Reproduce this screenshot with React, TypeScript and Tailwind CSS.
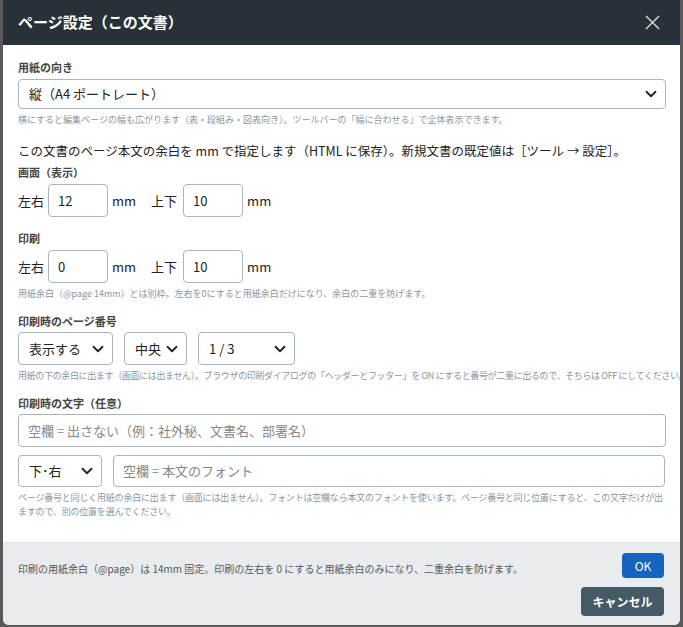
import React from "react";

const Chev = () => (
  <svg width="12" height="12" viewBox="0 0 16 16" className="absolute right-2 top-1/2 -translate-y-1/2 pointer-events-none">
    <path d="M2 5l6 6 6-6" fill="none" stroke="#222" strokeWidth="2.4" strokeLinecap="round" strokeLinejoin="round" />
  </svg>
);

const Sel = ({ w, h, text }: { w: string; h: string; text: string }) => (
  <div className={`relative ${w} ${h} border border-[#a9b4bc] rounded-[4px] flex items-center pl-[10px] text-[13px] text-[#222]`}>
    {text}
    <Chev />
  </div>
);

const Num = ({ v }: { v: string }) => (
  <div className="w-[60px] h-[33px] border border-[#a9b4bc] rounded-[4px] flex items-center pl-[9px] text-[13px] text-[#222]">{v}</div>
);

const Row = ({ a, b }: { a: string; b: string }) => (
  <div className="mt-[4px] flex items-center text-[13px] text-[#222]">
    <span className="mr-[4px]">左右</span><Num v={a} /><span className="ml-[4px] mr-[15px]">mm</span>
    <span className="mr-[6px]">上下</span><Num v={b} /><span className="ml-[4px]">mm</span>
  </div>
);

export default function App() {
  return (
    <div className="w-[683px] h-[627px] bg-[#5a5a5a] overflow-hidden" style={{ fontFamily: '"Noto Sans CJK JP", "Noto Sans", sans-serif' }}>
      <div className="mx-[3px] w-[677px] h-[625px] rounded-b-[6px] overflow-hidden flex flex-col bg-white">
        <div className="h-[45px] bg-[#263238] flex items-center justify-between pl-[15px] pr-[20px]">
          <span className="text-white text-[15px] font-bold">ページ設定（この文書）</span>
          <svg width="15" height="15" viewBox="0 0 16 16"><path d="M1 1l14 14M15 1L1 15" stroke="#cfd4d8" strokeWidth="1.6" /></svg>
        </div>
        <div className="flex-1 px-[15px] pt-[14px] text-[#333]">
          <div className="text-[11px] font-bold text-[#444] leading-[16px]">用紙の向き</div>
          <div className="mt-[4px]"><Sel w="w-[648px]" h="h-[30px]" text="縦（A4 ポートレート）" /></div>
          <div className="mt-[4px] text-[9px] text-[#8a969e] leading-[14px]">横にすると編集ページの幅も広がります（表・段組み・図表向き）。ツールバーの「幅に合わせる」で全体表示できます。</div>
          <div className="mt-[15px] text-[12.5px] text-[#222] leading-[18px]">この文書のページ本文の余白を mm で指定します（HTML に保存）。新規文書の既定値は［ツール → 設定］。</div>
          <div className="mt-[4px] text-[11px] font-bold text-[#444] leading-[16px]">画面（表示）</div>
          <Row a="12" b="10" />
          <div className="mt-[13px] text-[11px] font-bold text-[#444] leading-[16px]">印刷</div>
          <Row a="0" b="10" />
          <div className="mt-[4px] text-[9px] text-[#8a969e] leading-[14px]">用紙余白（@page 14mm）とは別枠。左右を0にすると用紙余白だけになり、余白の二重を防げます。</div>
          <div className="mt-[12px] text-[11px] font-bold text-[#444] leading-[16px]">印刷時のページ番号</div>
          <div className="mt-[3px] flex gap-[11px]">
            <Sel w="w-[95px]" h="h-[33px]" text="表示する" />
            <Sel w="w-[63px]" h="h-[33px]" text="中央" />
            <Sel w="w-[97px]" h="h-[33px]" text="1 / 3" />
          </div>
          <div className="mt-[4px] text-[9px] text-[#8a969e] leading-[14px] whitespace-nowrap tracking-[-0.35px]">用紙の下の余白に出ます（画面には出ません）。ブラウザの印刷ダイアログの「ヘッダーとフッター」を ON にすると番号が二重に出るので、そちらは OFF にしてください。</div>
          <div className="mt-[12px] text-[11px] font-bold text-[#444] leading-[16px]">印刷時の文字（任意）</div>
          <div className="mt-[3px] w-[648px] h-[33px] border border-[#a9b4bc] rounded-[4px] flex items-center pl-[9px] text-[13px] text-[#888]">空欄 = 出さない（例：社外秘、文書名、部署名）</div>
          <div className="mt-[8px] flex gap-[11px]">
            <Sel w="w-[84px]" h="h-[32px]" text="下･右" />
            <div className="w-[553px] h-[32px] border border-[#a9b4bc] rounded-[4px] flex items-center pl-[9px] text-[13px] text-[#888]">空欄 = 本文のフォント</div>
          </div>
          <div className="mt-[4px] text-[9px] text-[#8a969e] leading-[14px] tracking-[-0.2px]">ページ番号と同じく用紙の余白に出ます（画面には出ません）。フォントは空欄なら本文のフォントを使います。ページ番号と同じ位置にすると、この文字だけが出ますので、別の位置を選んでください。</div>
        </div>
        <div className="h-[83px] bg-[#e9ecef] border-t border-[#dde1e4] flex items-start justify-between pl-[15px] pr-[16px] pt-[10px]">
          <span className="mt-[8px] text-[10px] text-[#555]">印刷の用紙余白（@page）は 14mm 固定。印刷の左右を 0 にすると用紙余白のみになり、二重余白を防げます。</span>
          <div className="flex flex-col items-end gap-[9px]">
            <button className="w-[42px] h-[25px] bg-[#1565c0] text-white text-[12px] rounded-[4px]">OK</button>
            <button className="w-[83px] h-[29px] bg-[#455a64] text-white text-[12px] font-bold rounded-[4px]">キャンセル</button>
          </div>
        </div>
      </div>
    </div>
  );
}
